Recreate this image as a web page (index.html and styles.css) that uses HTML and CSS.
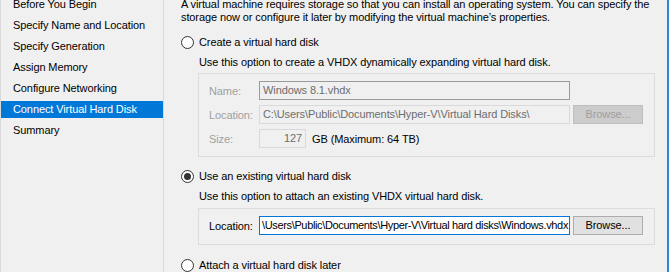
FILE: index.html
```html
<!DOCTYPE html>
<html>
<head>
<meta charset="utf-8">
<link rel="stylesheet" href="styles.css">
</head>
<body>
<div class="window">
  <nav class="nav">
    <ul class="steps">
      <li class="step">Before You Begin</li>
      <li class="step">Specify Name and Location</li>
      <li class="step">Specify Generation</li>
      <li class="step">Assign Memory</li>
      <li class="step">Configure Networking</li>
      <li class="step selected">Connect Virtual Hard Disk</li>
      <li class="step">Summary</li>
    </ul>
  </nav>
  <main class="main">
    <p class="intro">A virtual machine requires storage so that you can install an operating system. You can specify the storage now or configure it later by modifying the virtual machine’s properties.</p>

    <div class="option opt1">
      <span class="radio"></span>
      <span class="opt-label">Create a virtual hard disk</span>
    </div>
    <p class="desc">Use this option to create a VHDX dynamically expanding virtual hard disk.</p>
    <div class="group disabled">
      <div class="row">
        <span class="label">Name:</span>
        <span class="input name-input">Windows 8.1.vhdx</span>
      </div>
      <div class="row">
        <span class="label">Location:</span>
        <span class="input">C:\Users\Public\Documents\Hyper-V\Virtual Hard Disks\</span>
        <span class="button">Browse...</span>
      </div>
      <div class="row">
        <span class="label">Size:</span>
        <span class="input size-input">127</span>
        <span class="unit">GB (Maximum: 64 TB)</span>
      </div>
    </div>

    <div class="option opt2">
      <span class="radio checked"></span>
      <span class="opt-label">Use an existing virtual hard disk</span>
    </div>
    <p class="desc">Use this option to attach an existing VHDX virtual hard disk.</p>
    <div class="group enabled">
      <div class="row">
        <span class="label">Location:</span>
        <span class="input active"><span class="value">\Users\Public\Documents\Hyper-V\Virtual hard disks\Windows.vhdx</span><span class="caret"></span></span>
        <span class="button">Browse...</span>
      </div>
    </div>

    <div class="option opt3">
      <span class="radio"></span>
      <span class="opt-label">Attach a virtual hard disk later</span>
    </div>
  </main>
</div>
</body>
</html>
```
FILE: styles.css
```css
* { box-sizing: border-box; }
html, body {
  margin: 0;
  padding: 0;
  width: 669px;
  height: 272px;
  overflow: hidden;
  background: #f0f0f0;
}
body {
  font-family: "Liberation Sans", Arial, sans-serif;
  font-size: 11px;
  letter-spacing: -0.1px;
  color: #000;
}
.window {
  display: flex;
  height: 272px;
  border-left: 1px solid #dadada;
  border-right: 2px solid #2b88d8;
  overflow: hidden;
}
.nav {
  width: 163px;
  flex: none;
  border-right: 1px solid #dadada;
  background: #f0f0f0;
}
.steps {
  list-style: none;
  margin: -4px 0 0 0;
  padding: 0;
  display: flex;
  flex-direction: column;
  gap: 4px;
}
.step {
  height: 17px;
  line-height: 17px;
  padding-left: 12px;
  white-space: nowrap;
}
.step.selected {
  background: #0078d7;
  color: #fff;
}
.main {
  flex: 1;
  padding-left: 17px;
  padding-right: 12px;
}
.intro {
  margin: -2px 0 0 0;
  line-height: 13px;
}
.option {
  display: flex;
  align-items: center;
  height: 16px;
  gap: 5px;
}
.opt1 { margin-top: 10px; }
.opt2 { margin-top: 11px; }
.opt3 { margin-top: 12px; }
.radio {
  width: 13px;
  height: 13px;
  border: 1px solid #333;
  border-radius: 50%;
  background: #fff;
  flex: none;
  display: flex;
  align-items: center;
  justify-content: center;
}
.radio.checked::after {
  content: "";
  width: 7px;
  height: 7px;
  border-radius: 50%;
  background: #333;
}
.desc {
  margin: 4px 0 0 18px;
  height: 16px;
  line-height: 16px;
}
.group {
  margin: 3px 0 0 17px;
  border: 1px solid #dcdcdc;
  padding: 7px 10px 8px 10px;
  display: flex;
  flex-direction: column;
  gap: 5px;
}
.group.enabled { padding-bottom: 9px; margin-top: 4px; }
.row {
  display: flex;
  align-items: center;
  height: 19px;
}
.label {
  width: 50px;
  flex: none;
}
.disabled .label { color: #a0a0a0; }
.input {
  width: 311px;
  flex: none;
  height: 19px;
  line-height: 17px;
  border: 1px solid #d9d9d9;
  padding: 0 3px;
  white-space: nowrap;
  overflow: hidden;
  color: #6d6d6d;
  background: #f0f0f0;
}
.name-input { border-color: #9a9a9a; }
.size-input {
  width: 47px;
  text-align: right;
}
.unit { margin-left: 6px; }
.input.active {
  display: flex;
  align-items: center;
  border-color: #0078d7;
  background: #fff;
  color: #000;
  padding: 0 1px 0 2px;
  letter-spacing: -0.35px;
}
.value {
  flex: none;
  white-space: nowrap;
}
.caret {
  flex: none;
  width: 1px;
  height: 13px;
  margin-left: 1px;
  background: #000;
}
.button {
  width: 70px;
  flex: none;
  height: 19px;
  line-height: 17px;
  margin-left: 3px;
  text-align: center;
  border: 1px solid #adadad;
  background: #e1e1e1;
}
.disabled .button {
  background: #cccccc;
  border-color: #bfbfbf;
  color: #a0a0a0;
}
```
